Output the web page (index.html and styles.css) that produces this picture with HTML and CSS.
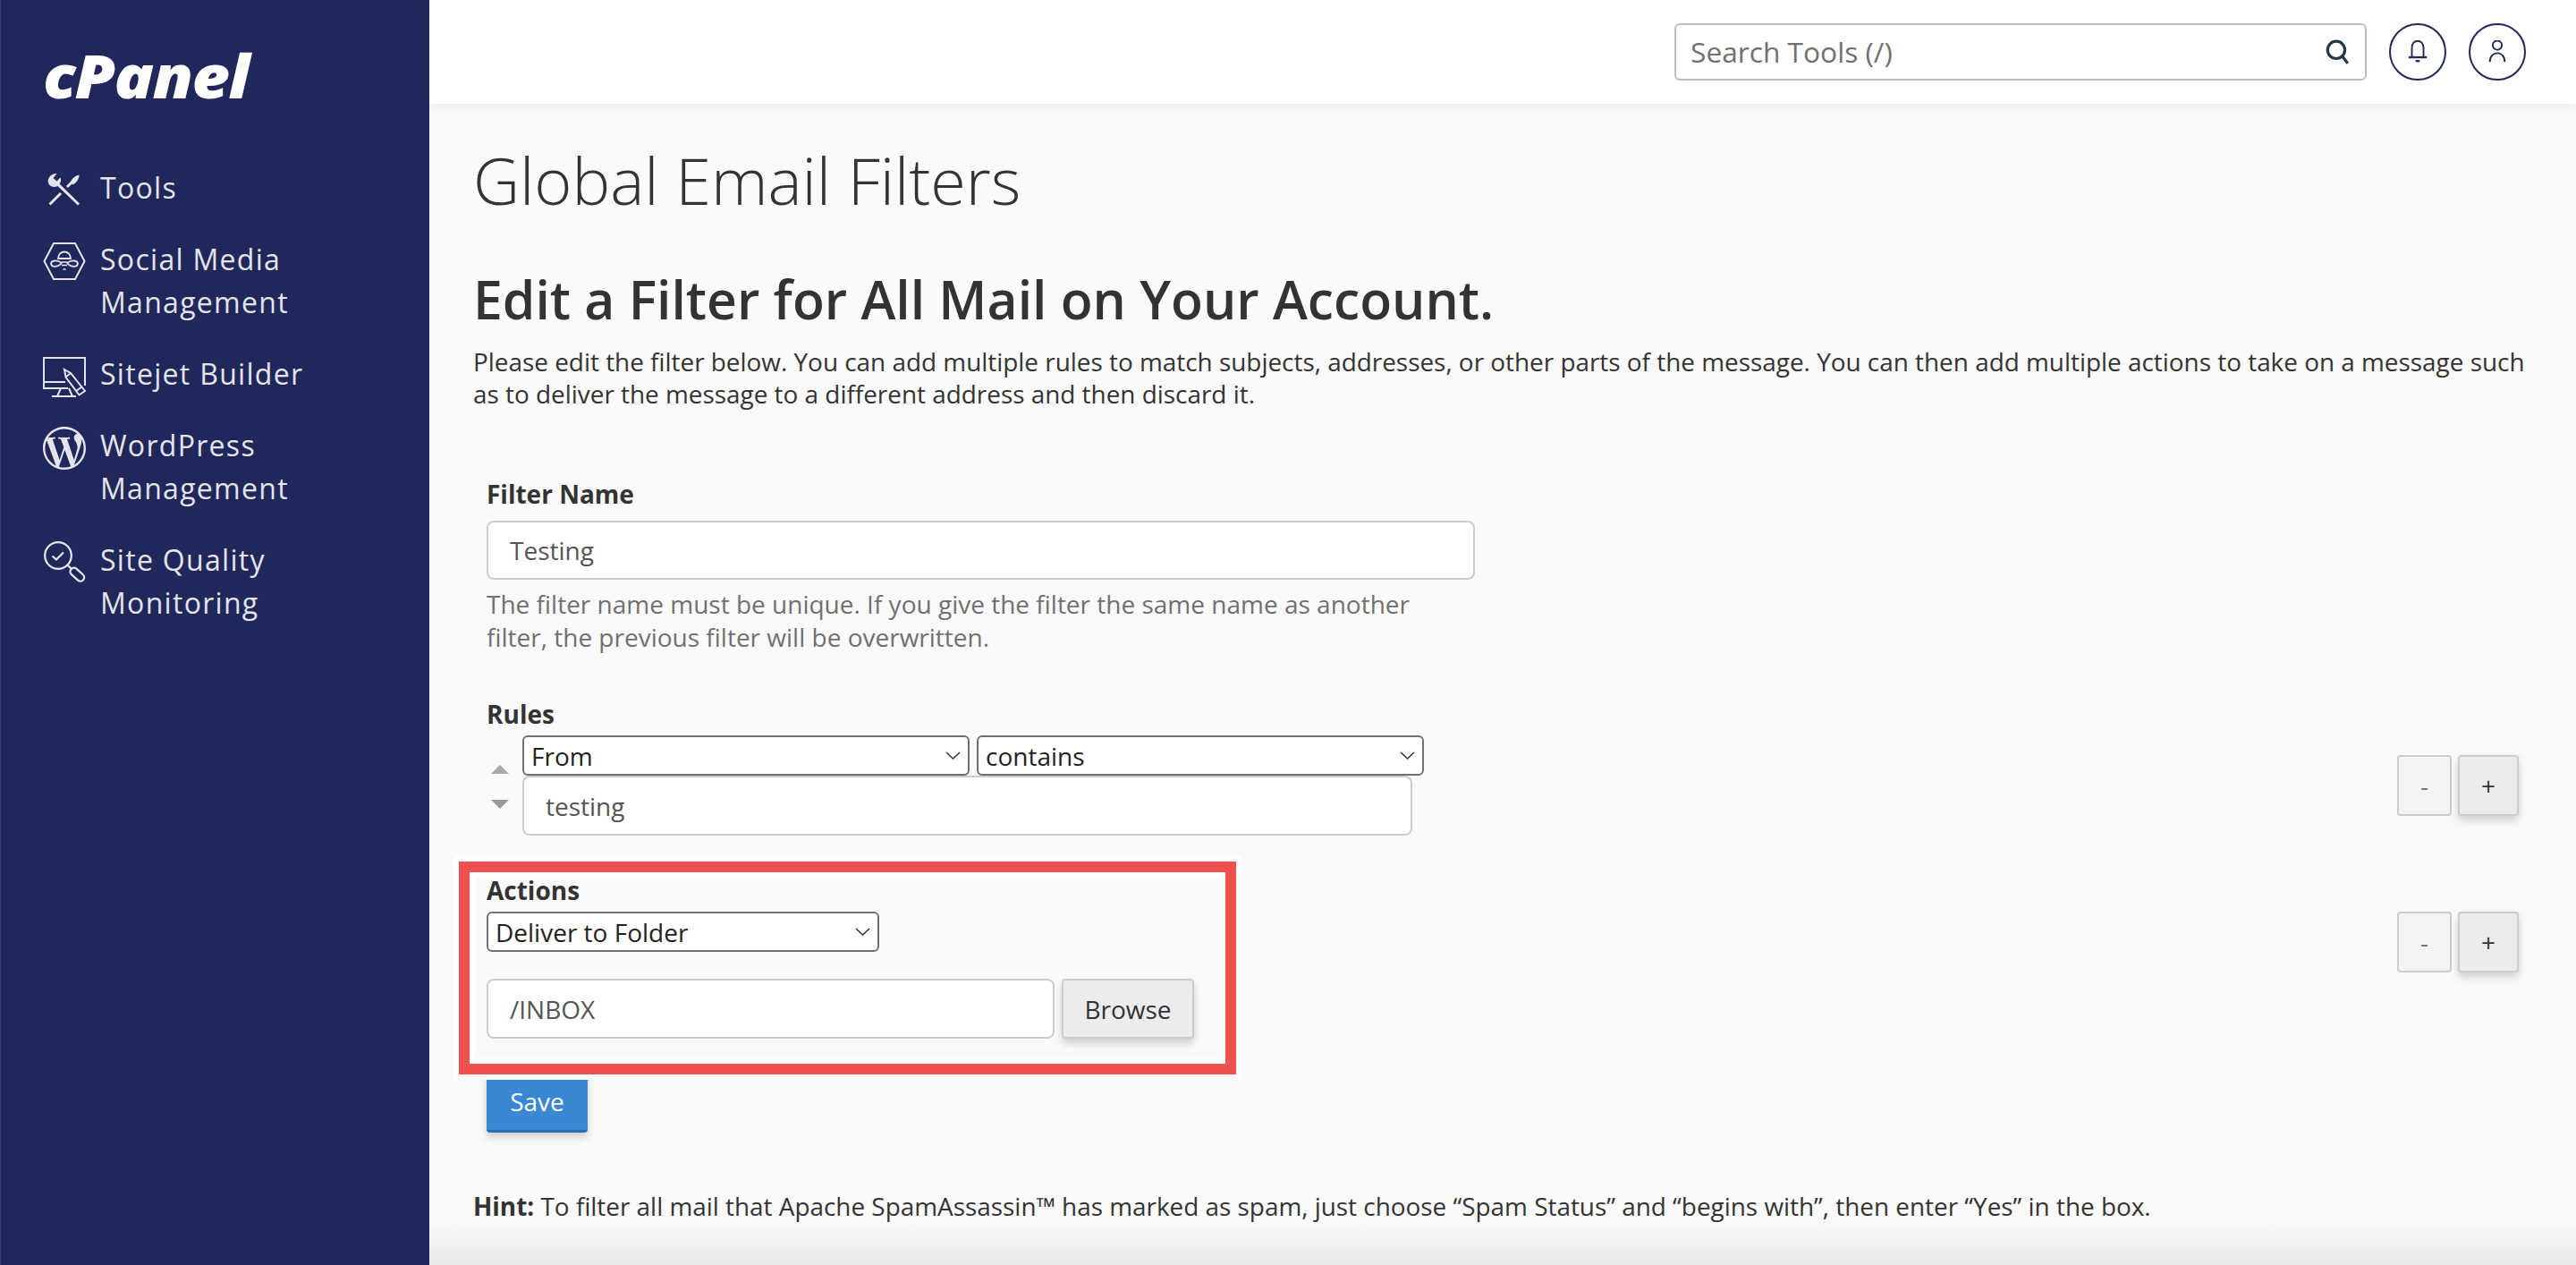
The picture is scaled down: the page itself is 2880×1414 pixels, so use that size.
FILE: index.html
```html
<!DOCTYPE html>
<html lang="en">
<head>
  <meta charset="UTF-8">
  <meta name="viewport" content="width=device-width, initial-scale=1.0">
  <title>Global Email Filters - cPanel</title>
  <link rel="stylesheet" href="styles.css">
</head>
<body>
  <!-- Sidebar -->
  <aside class="sidebar">
    <div class="logo"><span>cPanel</span></div>
    <nav class="menu">
      <a class="menu-item">
        <svg class="menu-icon" viewBox="0 0 48 48" fill="none" stroke="currentColor" stroke-width="3">
          <path d="M7.500 39.500 L20 27 M27 20 L33 14"/>
          <path d="M31 15 C32 10.500 36 7.500 40.500 6.500 C40.500 10.500 38 15 33.500 17.500 Z" fill="currentColor" stroke="none"/>
          <path d="M15.500 5 C9.500 4.500 4.500 10 6 15.500 C7 19.500 12 21 16.500 19 L39 40.500 L41 38.500 L18.500 16.500 C20.500 14 20.500 11.500 19.500 9.500 L15.500 13.500 L11.500 10 Z" fill="currentColor" stroke="none"/>
        </svg>
        <span>Tools</span>
      </a>
      <a class="menu-item">
        <svg class="menu-icon" viewBox="0 0 48 48" fill="none" stroke="currentColor" stroke-width="2">
          <path d="M12 3 H36 L46.500 23 L36 43 H12 L1.500 23 Z" stroke-linejoin="round"/>
          <path d="M17 20 C17 10 31 10 31 20 Z" stroke-width="1.800"/>
          <path d="M9 26 C9 22 16 21 21 25 C17 30 10 30 9 26 Z M39 26 C39 22 32 21 27 25 C31 30 38 30 39 26 Z" stroke-width="1.800"/>
          <path d="M21 24 H27 M21 27.500 H27 M22.500 32 H25.500" stroke-width="1.500"/>
        </svg>
        <span>Social Media<br>Management</span>
      </a>
      <a class="menu-item">
        <svg class="menu-icon" viewBox="0 0 48 48" fill="none" stroke="currentColor" stroke-width="2">
          <path d="M47 34 V3 H1 V37 H28"/>
          <path d="M1 30 H25 M20 37 L16 46 M29 37 L33 46 M10 46 H37"/>
          <path d="M24 16 L31 20 L47 40 L40.500 44.500 L25.500 24.500 Z M25.500 24.500 L31 20 M37 40 L43.500 35.500"/>
        </svg>
        <span>Sitejet Builder</span>
      </a>
      <a class="menu-item">
        <svg class="menu-icon" viewBox="0 0 24 24">
          <path fill="currentColor" d="M21.469 6.825c.84 1.537 1.318 3.3 1.318 5.175 0 3.979-2.156 7.456-5.363 9.325l3.295-9.527c.615-1.54.82-2.771.82-3.864 0-.405-.026-.78-.07-1.11m-7.981.105c.647-.03 1.232-.105 1.232-.105.582-.075.514-.93-.067-.899 0 0-1.755.135-2.88.135-1.064 0-2.85-.15-2.85-.15-.585-.03-.661.855-.075.885 0 0 .54.061 1.125.09l1.68 4.605-2.37 7.08L5.354 6.9c.649-.03 1.234-.1 1.234-.1.585-.075.516-.93-.065-.896 0 0-1.746.138-2.874.138-.2 0-.438-.008-.69-.015C4.911 3.15 8.235 1.215 12 1.215c2.809 0 5.365 1.072 7.286 2.833-.046-.003-.091-.009-.141-.009-1.06 0-1.812.923-1.812 1.914 0 .89.513 1.643 1.06 2.531.411.72.89 1.643.89 2.977 0 .915-.354 1.994-.821 3.479l-1.075 3.585-3.9-11.61.001.014zM12 22.784c-1.059 0-2.081-.153-3.048-.437l3.237-9.406 3.315 9.087c.024.053.05.101.078.149-1.12.393-2.325.609-3.582.609M1.211 12c0-1.564.336-3.05.935-4.39L7.29 21.709C3.694 19.96 1.212 16.271 1.211 12M12 0C5.385 0 0 5.385 0 12s5.385 12 12 12 12-5.385 12-12S18.615 0 12 0"/>
        </svg>
        <span>WordPress<br>Management</span>
      </a>
      <a class="menu-item">
        <svg class="menu-icon" viewBox="0 0 48 48" fill="none" stroke="currentColor" stroke-width="2.300">
          <circle cx="17" cy="16" r="14.800"/>
          <path d="M10.500 16.500 L15 20.500 L23 12.500"/>
          <path d="M27.500 26.500 L32 31"/>
          <rect x="29.500" y="33" width="18" height="8.500" rx="4.200" transform="rotate(42 38.500 37)"/>
        </svg>
        <span>Site Quality<br>Monitoring</span>
      </a>
    </nav>
  </aside>

  <div class="main">
    <!-- Header -->
    <header class="topbar">
      <div class="search">
        <input type="text" placeholder="Search Tools (/)">
        <svg class="search-icon" viewBox="0 0 28 28" fill="none" stroke="#1f3a46" stroke-width="3">
          <circle cx="13" cy="12" r="9"/>
          <path d="M19 18 L25 26"/>
        </svg>
      </div>
      <button class="round-btn">
        <svg viewBox="0 0 28 28" fill="none" stroke="#20275a" stroke-width="2">
          <path d="M7 20 V9 C7 -2 21 -2 21 9 V20"/>
          <path d="M3 20.500 H25" stroke-width="2.500"/>
          <path d="M11.500 25 H16.500" stroke-width="2.500"/>
        </svg>
      </button>
      <button class="round-btn">
        <svg viewBox="0 0 28 28" fill="none" stroke="#20275a" stroke-width="2">
          <circle cx="14" cy="6" r="5.500"/>
          <path d="M5 26 C5 12 23 12 23 26"/>
        </svg>
      </button>
    </header>

    <div class="content">
      <h1>Global Email Filters</h1>
      <h2>Edit a Filter for All Mail on Your Account.</h2>
      <p class="intro">Please edit the filter below. You can add multiple rules to match subjects, addresses, or other parts of the message. You can then add multiple actions to take on a message such as to deliver the message to a different address and then discard it.</p>

      <form class="filter-form">
        <!-- Filter name -->
        <div class="name-group">
          <label class="field-label">Filter Name</label>
          <input class="text-input name-input" type="text" value="Testing">
          <p class="help-text">The filter name must be unique. If you give the filter the same name as another filter, the previous filter will be overwritten.</p>
        </div>

        <!-- Rules -->
        <label class="field-label rules-label">Rules</label>
        <div class="row row-rule">
          <div class="rule-main">
            <div class="move-arrows">
              <span class="arrow-up"></span>
              <span class="arrow-down"></span>
            </div>
            <div class="rule-fields">
              <div class="select-row">
                <select class="select select-rule"><option>From</option></select>
                <select class="select select-rule"><option>contains</option></select>
              </div>
              <input class="text-input rule-input" type="text" value="testing">
            </div>
          </div>
          <div class="add-remove">
            <button type="button" class="btn btn-minus">-</button>
            <button type="button" class="btn btn-plus">+</button>
          </div>
        </div>

        <!-- Actions -->
        <label class="field-label actions-label">Actions</label>
        <div class="row row-action">
          <div class="action-main">
            <select class="select select-action"><option>Deliver to Folder</option></select>
            <div class="folder-row">
              <input class="text-input folder-input" type="text" value="/INBOX">
              <button type="button" class="btn btn-browse">Browse</button>
            </div>
            <!-- Red box drawn over the actions block -->
            <div class="highlight"></div>
          </div>
          <div class="add-remove">
            <button type="button" class="btn btn-minus">-</button>
            <button type="button" class="btn btn-plus">+</button>
          </div>
        </div>

        <button type="button" class="btn-save">Save</button>
      </form>

      <p class="hint"><strong>Hint:</strong> To filter all mail that Apache SpamAssassin™ has marked as spam, just choose “Spam Status” and “begins with”, then enter “Yes” in the box.</p>
    </div>
  </div>
</body>
</html>
```

FILE: styles.css
```css
* {
  box-sizing: border-box;
}
html, body {
  height: 100%;
}
body {
  margin: 0;
  display: flex;
  height: 100vh;
  overflow: hidden;
  font-family: "Open Sans", "Noto Sans", sans-serif;
  font-size: 28px;
  color: #333;
  background: #fafafa;
}

/* Sidebar */
.sidebar {
  width: 480px;
  flex: none;
  background: #20275a;
  border-left: 1px solid #3a4170;
  padding: 50px 0 0 47px;
  color: #e4e5ec;
}
.logo {
  height: 136px;
  font-size: 68px;
  line-height: 68px;
  font-weight: 800;
  font-style: italic;
  letter-spacing: -1.500px;
  color: #fff;
}
.logo span {
  display: inline-block;
  transform: scaleX(1.08);
  transform-origin: left center;
}
.menu {
  display: flex;
  flex-direction: column;
  gap: 32px;
}
.menu-item {
  display: flex;
  align-items: flex-start;
  gap: 16px;
  font-size: 32px;
  line-height: 48px;
  letter-spacing: 1.300px;
}
.menu-icon {
  width: 48px;
  height: 48px;
  flex: none;
  margin: 3px 0 -3px;
}

/* Header */
.main {
  flex: 1;
  min-width: 0;
  display: flex;
  flex-direction: column;
}
.topbar {
  height: 116px;
  flex: none;
  background: #fff;
  box-shadow: 0 2px 10px rgba(0, 0, 0, 0.07);
  display: flex;
  align-items: center;
  justify-content: flex-end;
  gap: 25px;
  padding-right: 56px;
  position: relative;
}
.search {
  width: 774px;
  height: 64px;
  border: 2px solid #babcce;
  border-radius: 6px;
  display: flex;
  align-items: center;
  padding: 0 16px;
}
.search input {
  flex: 1;
  border: none;
  outline: none;
  background: none;
  font-family: inherit;
  font-size: 31.700px;
  padding: 0 0 2px;
}
.search input::placeholder {
  color: #707070;
  opacity: 1;
}
.search-icon {
  width: 30px;
  height: 30px;
}
.round-btn {
  width: 64px;
  height: 64px;
  padding: 17px;
  border: 2px solid #20275a;
  border-radius: 50%;
  background: #fff;
}
.round-btn svg {
  display: block;
  width: 100%;
  height: 100%;
}

/* Content */
.content {
  flex: 1;
  padding: 40px 49px 0;
  background: linear-gradient(to top, #e9e9e9, #fafafa 52px);
}
h1 {
  margin: 0;
  font-size: 72px;
  line-height: 90px;
  font-weight: 300;
  letter-spacing: -0.050px;
}
h2 {
  margin: 47px 0 0;
  font-size: 58.800px;
  line-height: 82px;
  font-weight: 600;
}
.intro {
  margin: 11px 0 0;
  font-size: 27.900px;
  line-height: 36px;
}
.filter-form {
  padding: 0 15px 0 15px;
  margin-top: 74px;
}
.field-label {
  display: block;
  font-weight: 700;
  line-height: 40px;
}
.text-input {
  display: block;
  height: 66px;
  border: 2px solid #ccc;
  border-radius: 8px;
  background: #fff;
  padding: 0 24px;
  font-family: inherit;
  font-size: 28px;
  color: #555;
}
.name-input {
  width: 1105px;
  margin-top: 10px;
}
.help-text {
  width: 1105px;
  margin: 9px 0 0;
  line-height: 37px;
  color: #707070;
}
.rules-label {
  margin-top: 47px;
  margin-bottom: 4px;
}
.row {
  display: flex;
  justify-content: space-between;
}
.row-rule {
  align-items: center;
}
.rule-main {
  display: flex;
}
.move-arrows {
  width: 40px;
  display: flex;
  flex-direction: column;
  align-items: flex-start;
  gap: 29px;
  padding: 33px 0 0 5px;
}
.arrow-up {
  border: 10px solid transparent;
  border-top: none;
  border-bottom: 10px solid #aaa;
}
.arrow-down {
  border: 10px solid transparent;
  border-bottom: none;
  border-top: 10px solid #999;
}
.select-row {
  display: flex;
  gap: 8px;
}
.select {
  display: block;
  height: 45px;
  appearance: none;
  border: 2px solid #707070;
  border-radius: 6px;
  padding: 0 30px 0 8px;
  font-family: inherit;
  font-size: 28px;
  color: #222;
  background: #fff url("data:image/svg+xml,%3Csvg xmlns='http://www.w3.org/2000/svg' width='17' height='9' fill='none' stroke='%23333' stroke-width='1.500'%3E%3Cpath d='M1 1 L8.500 8 L16 1'/%3E%3C/svg%3E") no-repeat right 8px center;
}
.select-rule {
  width: 500px;
}
.rule-input {
  width: 995px;
  height: 67px;
}
.add-remove {
  display: flex;
  gap: 7px;
}
.btn {
  height: 68px;
  border: 2px solid #ccc;
  border-radius: 4px;
  font-family: inherit;
  font-size: 28px;
  color: #333;
  background: #ececec;
  box-shadow: 0 5px 10px rgba(0, 0, 0, 0.18);
}
.btn-minus {
  width: 61px;
  color: #777;
  background: #f4f4f4;
  box-shadow: none;
}
.btn-plus {
  width: 68px;
}
.actions-label {
  margin-top: 41px;
  margin-bottom: 4px;
}
.action-main {
  position: relative;
}
.select-action {
  width: 439px;
}
.folder-row {
  display: flex;
  gap: 8px;
  margin-top: 30px;
}
.folder-input {
  width: 635px;
  height: 67px;
}
.btn-browse {
  width: 148px;
  height: 67px;
}
.highlight {
  position: absolute;
  left: -31px;
  top: -56px;
  width: 869px;
  height: 238px;
  border: 12px solid #ee4f4f;
  box-shadow: 0 0 0 6px #fff, inset 0 0 0 6px #fff;
  pointer-events: none;
  z-index: 2;
}
.btn-save {
  display: block;
  width: 113px;
  height: 67px;
  margin-top: 38px;
  border: none;
  border-bottom: 3px solid #2a6cae;
  border-radius: 4px;
  background: #3a87d3;
  color: #fff;
  font-family: inherit;
  font-size: 28px;
  box-shadow: 0 5px 10px rgba(0, 0, 0, 0.18);
}
.hint {
  margin: 64px 0 0;
  font-size: 27.900px;
  line-height: 37px;
}
```
